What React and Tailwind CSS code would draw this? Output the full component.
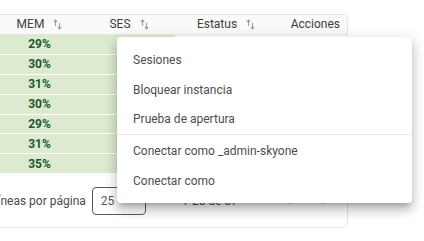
import React from 'react';

const rows = ['29%', '30%', '31%', '30%', '29%', '31%', '35%'];

const menuItems = [
  { label: 'Sesiones' },
  { label: 'Bloquear instancia' },
  { label: 'Prueba de apertura', divider: true },
  { label: 'Conectar como _admin-skyone' },
  { label: 'Conectar como' },
];

const SortIcon = () => (
  <svg width="9" height="11" viewBox="0 0 9 11" className="ml-[9px] shrink-0">
    <path d="M2.5 1 L2.5 7 M0.8 2.8 L2.5 1 L4.2 2.8" stroke="#9a9a9a" strokeWidth="1.1" fill="none" />
    <path d="M6.5 4 L6.5 10 M4.8 8.2 L6.5 10 L8.2 8.2" stroke="#9a9a9a" strokeWidth="1.1" fill="none" />
  </svg>
);

const HeaderCell = ({ label, className }) => (
  <div className={`flex items-center justify-center h-full ${className}`}>
    <span>{label}</span>
    <SortIcon />
  </div>
);

const App = () => {
  return (
    <div
      className="relative w-[424px] h-[241px] overflow-hidden bg-white text-[12px]"
      style={{ fontFamily: 'Roboto, "Liberation Sans", sans-serif' }}
    >
      <div className="pt-[14px] ml-[-5px]">
        <div className="w-[353px] h-[214px] border border-[#e3e3e3] rounded-[5px] flex flex-col overflow-hidden">
          <div className="flex h-[20px] bg-[#fafafa] border-b border-[#e6e6e6] text-[#3d3d3d]">
            <HeaderCell label="MEM" className="w-[87px]" />
            <HeaderCell label="SES" className="w-[92px]" />
            <HeaderCell label="Estatus" className="w-[102px]" />
            <div className="flex-1 flex items-center justify-end pr-[7px]">Acciones</div>
          </div>
          {rows.map((v, i) => (
            <div key={i} className="flex h-[20px] border-b border-white">
              <div className="w-[87px] bg-[#dcebcf] flex items-center justify-center font-bold text-[#1d5631]">
                {v}
              </div>
              <div className="w-[92px] bg-[#dcebcf]" />
              <div className="flex-1 bg-white" />
            </div>
          ))}
          <div className="flex items-center h-[53px] text-[#4a4a4a]">
            <span className="ml-[-5px] whitespace-nowrap">Líneas por página</span>
            <div className="ml-[6px] w-[54px] h-[28px] border border-[#5a5a5a] rounded-[4px] flex items-center pl-[8px] text-[#5a5a5a]">
              25
            </div>
            <span className="ml-[36px] text-[#555]">1-25 de 37</span>
            <span className="ml-[50px] text-[#888]">‹</span>
            <span className="ml-[30px] text-[#888]">›</span>
          </div>
        </div>
      </div>

      <div className="absolute left-[117px] top-[37px] w-[295px] bg-white rounded-[4px] pt-[7px] pb-[8px] text-[12px] text-[#4d4d4d] shadow-[0_5px_5px_-3px_rgba(0,0,0,0.2),0_8px_10px_1px_rgba(0,0,0,0.14),0_3px_14px_2px_rgba(0,0,0,0.12)]">
        {menuItems.map((item) => (
          <div
            key={item.label}
            className={`flex items-center pl-[16px] ${item.divider ? 'border-b border-[#e8e8e8] h-[31px] pb-[1px]' : 'h-[30px] pt-[1px]'}`}
          >
            {item.label}
          </div>
        ))}
      </div>
    </div>
  );
};

export default App;
